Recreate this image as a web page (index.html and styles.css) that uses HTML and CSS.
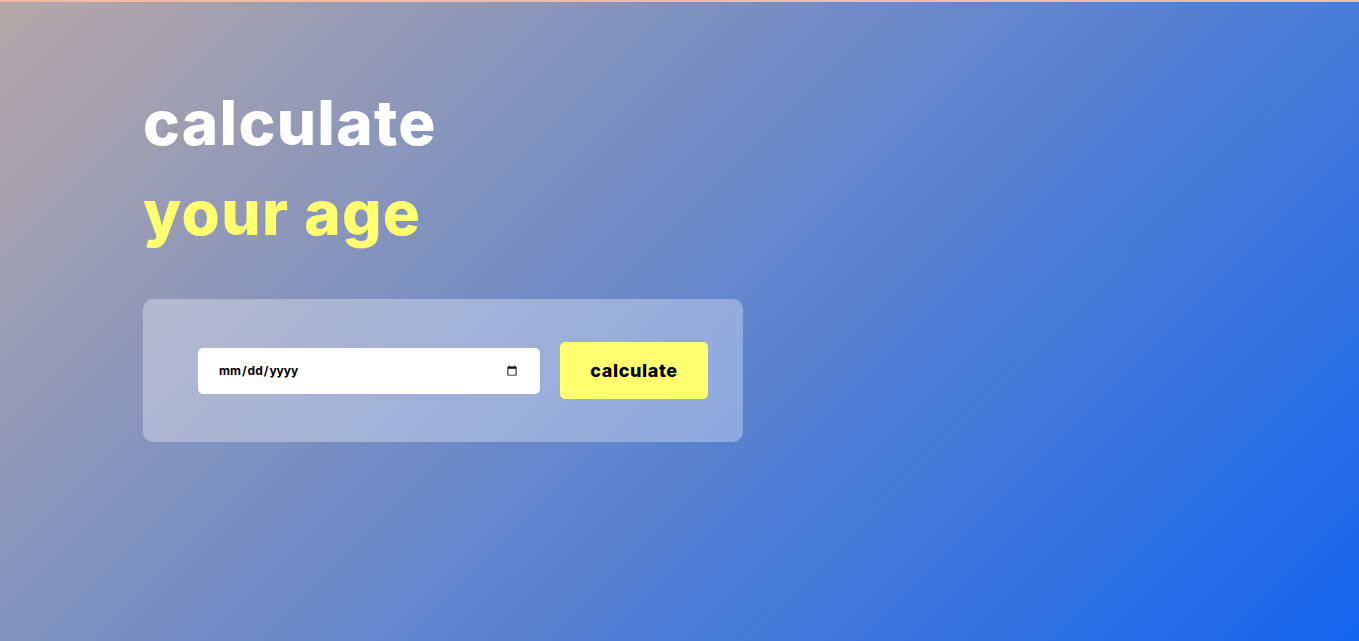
FILE: index.html
```html
<!DOCTYPE html>
<html lang="en">
<head>
<meta charset="utf-8">
<title>Age Calculator</title>
<link rel="stylesheet" href="styles.css">
</head>
<body>
<main class="page">
  <h1 class="title">
    <span class="line white">calculate</span>
    <span class="line yellow">your age</span>
  </h1>
  <div class="card">
    <input class="date" type="date">
    <button class="btn" type="button">calculate</button>
  </div>
</main>
</body>
</html>
```

FILE: styles.css
```css
* { box-sizing: border-box; }
html, body { height: 100%; }
body {
  margin: 0;
  border-top: 2px solid #f2bba6;
  background: linear-gradient(135deg, #b6a8a8 0%, #1565ee 100%);
  font-family: Inter, "Noto Sans", sans-serif;
  overflow: hidden;
}
.page {
  padding: 76px 0 0 143px;
}
.title {
  margin: 0;
  font-weight: 800;
  font-size: 62px;
  letter-spacing: 1.3px;
  line-height: 90px;
}
.line { display: block; }
.white { color: #ffffff; }
.yellow { color: #ffff70; }
.card {
  margin-top: 41px;
  width: 600px;
  height: 143px;
  border-radius: 10px;
  background: rgba(255, 255, 255, 0.32);
  display: flex;
  align-items: center;
  padding-left: 55px;
  gap: 20px;
}
.date {
  width: 342px;
  height: 46px;
  border: none;
  border-radius: 5px;
  background: #fff;
  padding: 0 20px;
  font-family: Inter, sans-serif;
  font-weight: 700;
  font-size: 12px;
  color: #000;
  outline: none;
}
.btn {
  width: 148px;
  height: 57px;
  border: none;
  border-radius: 5px;
  background: #ffff70;
  font-family: Inter, sans-serif;
  font-weight: 800;
  font-size: 18px;
  letter-spacing: 0.6px;
  color: #000;
  cursor: pointer;
}
```
